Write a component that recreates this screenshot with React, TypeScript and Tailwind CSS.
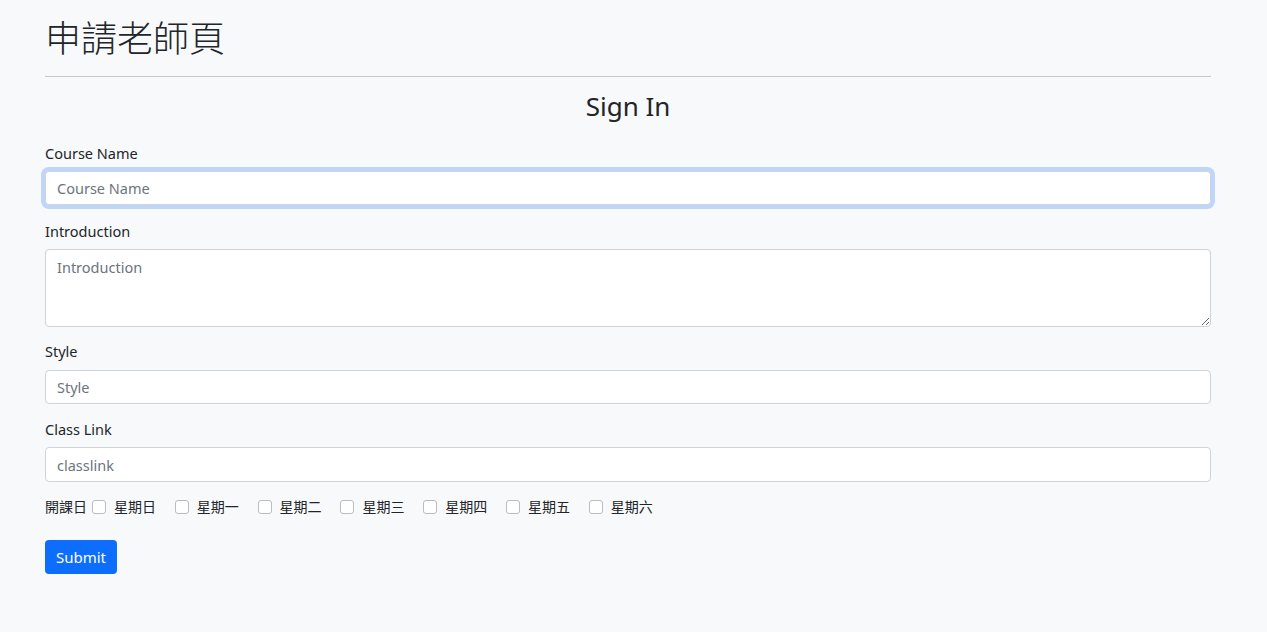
import { useState } from 'react';

const days = ['星期日', '星期一', '星期二', '星期三', '星期四', '星期五', '星期六'];

export default function App() {
  const [checked, setChecked] = useState<string[]>([]);

  const toggle = (d: string) =>
    setChecked((prev) => (prev.includes(d) ? prev.filter((x) => x !== d) : [...prev, d]));

  const font = "font-['Noto_Sans','Noto_Sans_CJK_TC',sans-serif]";
  const inputCls =
    'block w-full h-[34px] rounded-[4px] border border-[#ced4da] bg-white px-[11px] text-[14.5px] text-[#212529] placeholder:text-[#6c757d] outline-none';

  return (
    <div className={`min-h-screen bg-[#f8f9fa] text-[#212529] ${font}`}>
      <div className="ml-[45px] w-[1166px] pt-[18px]">
        <h1 className="text-[36px] leading-[42px] font-light">申請老師頁</h1>
        <hr className="mt-[16px] border-0 border-t border-[#c6c7c9]" />
        <h3 className="mt-[12px] text-center text-[26px] leading-[34px] font-normal">Sign In</h3>

        <form className="mt-[19px]" onSubmit={(e) => e.preventDefault()}>
          <label className="block text-[14.5px] leading-[22px] mb-[7px]">Course Name</label>
          <input
            autoFocus
            placeholder="Course Name"
            className={`${inputCls} border-[#86b7fe] shadow-[0_0_0_4px_rgba(13,110,253,0.25)]`}
          />

          <label className="block text-[14.5px] leading-[22px] mt-[15px] mb-[7px]">Introduction</label>
          <textarea
            placeholder="Introduction"
            className="block w-full h-[78px] rounded-[4px] border border-[#ced4da] bg-white px-[11px] py-[6px] text-[14.5px] leading-[22px] placeholder:text-[#6c757d] outline-none"
          />

          <label className="block text-[14.5px] leading-[22px] mt-[13px] mb-[8px]">Style</label>
          <input placeholder="Style" className={inputCls} />

          <label className="block text-[14.5px] leading-[22px] mt-[14px] mb-[7px]">Class Link</label>
          <input placeholder="classlink" className={`${inputCls} h-[35px]`} />

          <div className="mt-[14px] flex items-center text-[14px] leading-[22px]">
            <span>開課日</span>
            {days.map((d) => (
              <label key={d} className="ml-[5px] mr-[13.8px] flex items-center">
                <span
                  onClick={() => toggle(d)}
                  className={`inline-block h-[14px] w-[14px] rounded-[3px] border border-[#b9bcc0] ${
                    checked.includes(d) ? 'bg-[#0d6efd]' : 'bg-white'
                  }`}
                />
                <span className="ml-[8px]">{d}</span>
              </label>
            ))}
          </div>

          <button
            type="submit"
            className="mt-[22px] h-[34px] w-[72px] rounded-[4px] bg-[#0d6efd] text-[15px] text-white"
          >
            Submit
          </button>
        </form>
      </div>
    </div>
  );
}
